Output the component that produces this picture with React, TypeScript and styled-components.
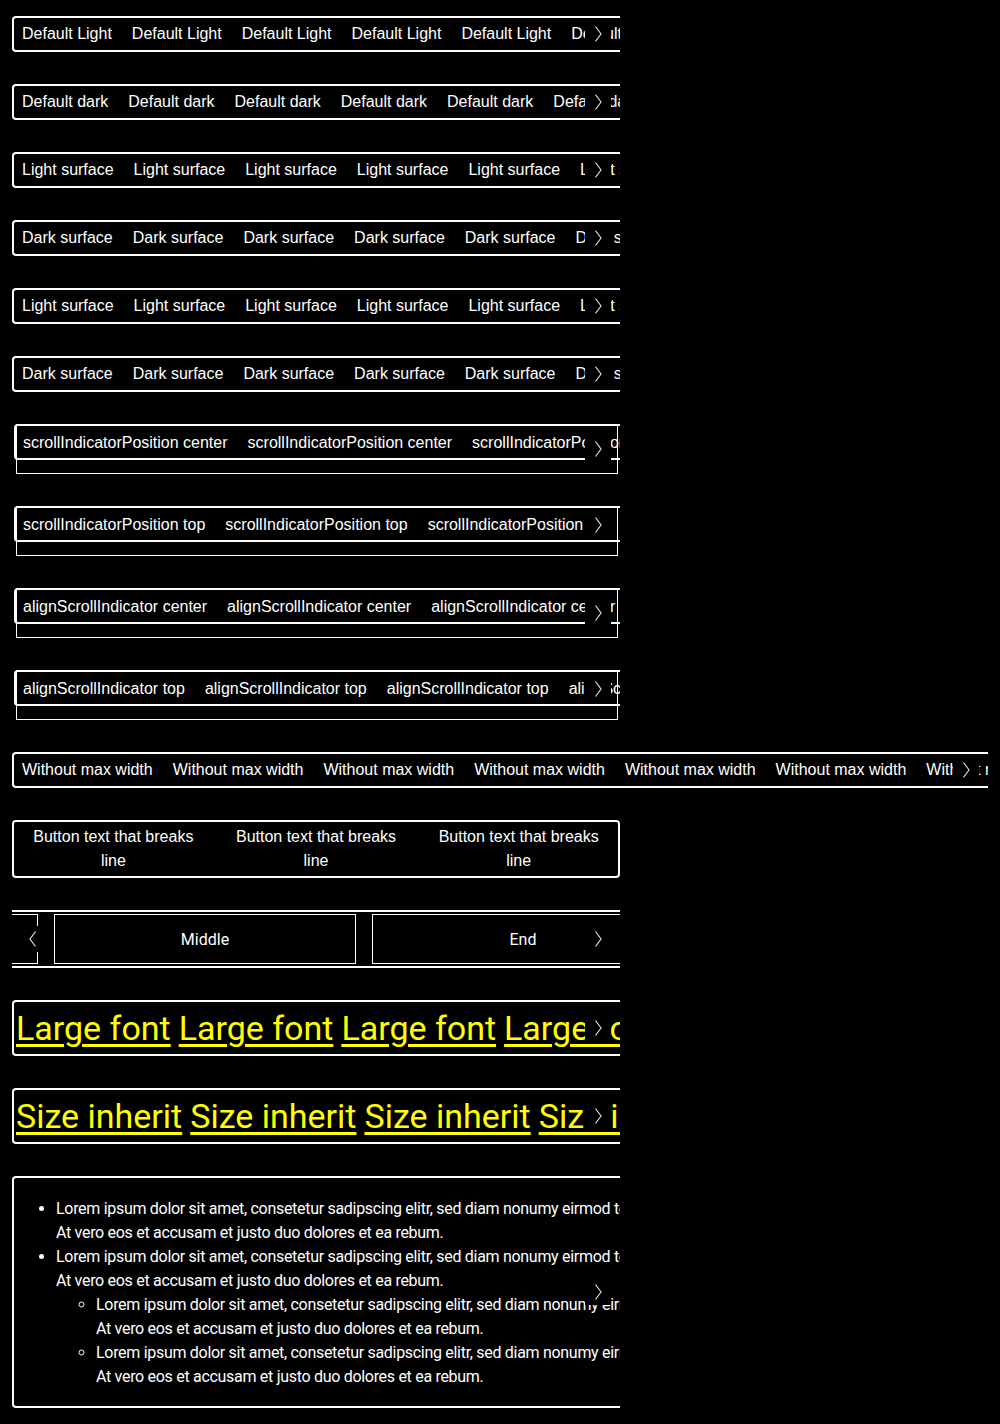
import React from 'react';
import styled, { createGlobalStyle } from 'styled-components';

// --- GLOBAL ---

const GlobalStyle = createGlobalStyle`
  html, body {
    margin: 0;
    padding: 0;
    background: #000;
  }
  body {
    color: #fff;
    font-family: "Liberation Sans", Arial, sans-serif;
    font-size: 16px;
  }
`;

// --- STYLED COMPONENTS ---

const Page = styled.div`
  display: flex;
  flex-direction: column;
  gap: 32px;
  padding: 16px 12px;
`;

const Scroller = styled.div<{ $wide?: boolean; $closed?: boolean }>`
  position: relative;
  box-sizing: border-box;
  width: ${(p) => (p.$wide ? '976px' : '608px')};
  border: 2px solid #fff;
  border-right: ${(p) => (p.$closed ? '2px solid #fff' : 'none')};
  border-radius: ${(p) => (p.$closed ? '4px' : '4px 0 0 4px')};
  overflow: hidden;
`;

const Track = styled.div`
  display: flex;
  gap: 20px;
  padding: 4px 8px;
  white-space: nowrap;
  line-height: 24px;
`;

const Item = styled.span`
  flex-shrink: 0;
  color: #fff;
`;

const Indicator = styled.div<{ $left?: boolean; $size?: number }>`
  position: absolute;
  z-index: 1;
  ${(p) => (p.$left ? 'left: 8px;' : 'right: 9px;')}
  top: 50%;
  transform: translateY(-50%);
  width: 26px;
  height: ${(p) => p.$size ?? 26}px;
  background: #000;
  display: flex;
  align-items: center;
  justify-content: center;
`;

const FrameIndicator = styled(Indicator)<{ $top?: boolean }>`
  right: 6px;
  top: ${(p) => (p.$top ? '5px' : '50%')};
  transform: ${(p) => (p.$top ? 'none' : 'translateY(-50%)')};
  height: ${(p) => (p.$top ? '26px' : '36px')};
`;

const Frame = styled.div`
  position: relative;
  box-sizing: border-box;
  margin-left: 4px;
  width: 602px;
  height: 50px;
  border: 1px solid #fff;
`;

const FramedScroller = styled(Scroller)`
  width: 606px;
  margin: -1px 0 0 -3px;
  position: static;
`;

const FrameTrack = styled(Track)`
  padding: 5px 8px 3px 7px;
`;

const WrapTrack = styled.div`
  display: flex;
  gap: 20px;
  padding: 3px 8px;
  line-height: 24px;
`;

const WrapButton = styled.span`
  flex: 1 1 0;
  text-align: center;
  color: #fff;
`;

const PagedScroller = styled.div`
  position: relative;
  width: 608px;
  box-sizing: border-box;
  border-top: 2px solid #fff;
  border-bottom: 2px solid #fff;
  overflow: hidden;
`;

const PagedTrack = styled.div`
  display: flex;
  gap: 16px;
  padding: 2px 0;
  transform: translateX(-276px);
`;

const PageItem = styled.div`
  flex-shrink: 0;
  box-sizing: border-box;
  width: 302px;
  height: 50px;
  border: 1px solid #fff;
  display: flex;
  align-items: center;
  justify-content: center;
  font-family: Roboto, "Liberation Sans", sans-serif;
  color: #fff;
`;

const LinkTrack = styled.div`
  display: flex;
  gap: 8px;
  padding: 0 2px;
  white-space: nowrap;
  font-family: Roboto, "Liberation Sans", sans-serif;
  font-size: 34px;
  line-height: 52px;
`;

const YellowLink = styled.a`
  flex-shrink: 0;
  color: #ff0;
  text-decoration: underline;
  text-decoration-thickness: 3px;
  text-underline-offset: 4px;
`;

const ListBox = styled(Scroller)`
  padding: 2px;
  font-family: Roboto, "Liberation Sans", sans-serif;
  letter-spacing: -0.3px;
  line-height: 24px;
  white-space: nowrap;
`;

const List = styled.ul<{ $nested?: boolean }>`
  margin: ${(p) => (p.$nested ? '0' : '17px 0 15px')};
  padding-left: 40px;
  list-style: ${(p) => (p.$nested ? 'circle' : 'disc')};
`;

// --- ICON ---

const Chevron: React.FC<{ left?: boolean }> = ({ left }) => (
  <svg width="12" height="18" viewBox="0 0 12 18" fill="none">
    <path
      d={left ? 'M8.5 1.5 L3 9 L8.5 16.5' : 'M3.5 1.5 L9 9 L3.5 16.5'}
      stroke="#ddd"
      strokeWidth="1.2"
    />
  </svg>
);

// --- DATA ---

const simpleRows = [
  'Default Light',
  'Default dark',
  'Light surface',
  'Dark surface',
  'Light surface',
  'Dark surface',
];

const framedRows: { label: string; top: boolean }[] = [
  { label: 'scrollIndicatorPosition center', top: false },
  { label: 'scrollIndicatorPosition top', top: true },
  { label: 'alignScrollIndicator center', top: false },
  { label: 'alignScrollIndicator top', top: true },
];

const repeat = (n: number) => Array.from({ length: n }, (_, i) => i);

const lorem1 =
  'Lorem ipsum dolor sit amet, consetetur sadipscing elitr, sed diam nonumy eirmod tempor invidunt ut labore et dolore magna aliquyam erat, sed diam voluptua.';
const lorem2 = 'At vero eos et accusam et justo duo dolores et ea rebum.';

const LoremItem: React.FC<{ children?: React.ReactNode }> = ({ children }) => (
  <li>
    {lorem1}
    <br />
    {lorem2}
    {children}
  </li>
);

// --- COMPONENT ---

const App: React.FC = () => {
  return (
    <>
      <GlobalStyle />
      <Page>
        {simpleRows.map((label, r) => (
          <Scroller key={r}>
            <Track>
              {repeat(8).map((i) => (
                <Item key={i}>{label}</Item>
              ))}
            </Track>
            <Indicator>
              <Chevron />
            </Indicator>
          </Scroller>
        ))}

        {framedRows.map((row) => (
          <Frame key={row.label}>
            <FramedScroller>
              <FrameTrack>
                {repeat(6).map((i) => (
                  <Item key={i}>{row.label}</Item>
                ))}
              </FrameTrack>
            </FramedScroller>
            <FrameIndicator $top={row.top}>
              <Chevron />
            </FrameIndicator>
          </Frame>
        ))}

        <Scroller $wide>
          <Track>
            {repeat(10).map((i) => (
              <Item key={i}>Without max width</Item>
            ))}
          </Track>
          <Indicator>
            <Chevron />
          </Indicator>
        </Scroller>

        <Scroller $closed>
          <WrapTrack>
            {repeat(3).map((i) => (
              <WrapButton key={i}>Button text that breaks line</WrapButton>
            ))}
          </WrapTrack>
        </Scroller>

        <PagedScroller>
          <PagedTrack>
            <PageItem>Start</PageItem>
            <PageItem>Middle</PageItem>
            <PageItem>End</PageItem>
          </PagedTrack>
          <Indicator $left>
            <Chevron left />
          </Indicator>
          <Indicator>
            <Chevron />
          </Indicator>
        </PagedScroller>

        <Scroller>
          <LinkTrack>
            {repeat(6).map((i) => (
              <YellowLink key={i} href="#">
                Large font
              </YellowLink>
            ))}
          </LinkTrack>
          <Indicator $size={30}>
            <Chevron />
          </Indicator>
        </Scroller>

        <Scroller>
          <LinkTrack>
            {repeat(6).map((i) => (
              <YellowLink key={i} href="#">
                Size inherit
              </YellowLink>
            ))}
          </LinkTrack>
          <Indicator $size={30}>
            <Chevron />
          </Indicator>
        </Scroller>

        <ListBox>
          <List>
            <LoremItem />
            <LoremItem>
              <List $nested>
                <LoremItem />
                <LoremItem />
              </List>
            </LoremItem>
          </List>
          <Indicator>
            <Chevron />
          </Indicator>
        </ListBox>
      </Page>
    </>
  );
};

export default App;
